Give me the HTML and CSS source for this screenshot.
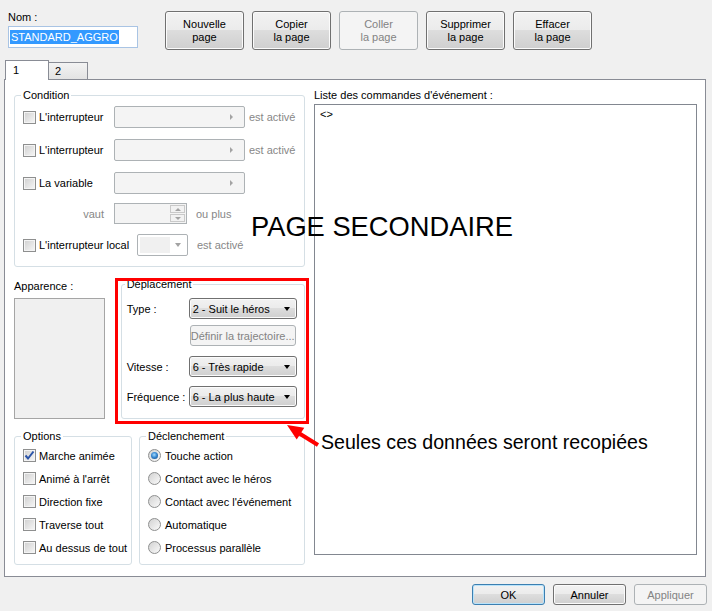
FILE: index.html
```html
<!DOCTYPE html>
<html>
<head>
<meta charset="utf-8">
<title>Page d'événement</title>
<link rel="stylesheet" href="styles.css">
</head>
<body>
<div class="fenetre">
	<div class="haut">
		<div class="nom">
			<label>Nom :</label>
			<div class="champ"><span class="selection">STANDARD_AGGRO</span></div>
		</div>
		<div class="boutons">
			<div class="bouton">Nouvelle<br>page</div>
			<div class="bouton">Copier<br>la page</div>
			<div class="bouton inactif">Coller<br>la page</div>
			<div class="bouton">Supprimer<br>la page</div>
			<div class="bouton">Effacer<br>la page</div>
		</div>
	</div>

	<div class="onglets">
		<div class="onglet actif">1</div>
		<div class="onglet">2</div>
	</div>

	<div class="panneau">
		<div class="gauche">
			<fieldset class="groupe condition">
				<legend>Condition</legend>
				<div class="ligne l1">
					<div class="coche-label"><span class="case"></span>L'interrupteur</div>
					<div class="selecteur"><span class="pointe"></span></div>
					<span class="gris suite">est activé</span>
				</div>
				<div class="ligne l2">
					<div class="coche-label"><span class="case"></span>L'interrupteur</div>
					<div class="selecteur"><span class="pointe"></span></div>
					<span class="gris suite">est activé</span>
				</div>
				<div class="ligne l2">
					<div class="coche-label"><span class="case"></span>La variable</div>
					<div class="selecteur"><span class="pointe"></span></div>
				</div>
				<div class="ligne l3 basse">
					<div class="vaut gris">vaut</div>
					<div class="spin">
						<div class="spin-btns">
							<span class="spin-b"><i class="haut-f"></i></span>
							<span class="spin-b"><i class="bas-f"></i></span>
						</div>
					</div>
					<span class="gris apres">ou plus</span>
				</div>
				<div class="ligne l4">
					<div class="coche-label large"><span class="case"></span>L'interrupteur local</div>
					<div class="deroul-gris"><span class="creux"></span><i class="bas-g"></i></div>
					<span class="gris apres">est activé</span>
				</div>
			</fieldset>

			<div class="milieu">
				<div class="apparence">
					<div class="etiquette">Apparence :</div>
					<div class="apercu"></div>
				</div>
				<fieldset class="groupe deplacement">
					<legend>Déplacement</legend>
					<div class="ligne-d">
						<span class="etiq">Type :</span>
						<div class="liste">2 - Suit le héros<span class="triangle"></span></div>
					</div>
					<div class="ligne-d d2">
						<span class="etiq"></span>
						<div class="definir">Définir la trajectoire...</div>
					</div>
					<div class="ligne-d d3">
						<span class="etiq">Vitesse :</span>
						<div class="liste">6 - Très rapide<span class="triangle"></span></div>
					</div>
					<div class="ligne-d d4">
						<span class="etiq">Fréquence :</span>
						<div class="liste">6 - La plus haute<span class="triangle"></span></div>
					</div>
				</fieldset>
			</div>

			<div class="bas">
				<fieldset class="groupe options">
					<legend>Options</legend>
					<div class="choix"><span class="case coche"><svg width="11" height="11" viewBox="0 0 11 11"><path d="M1.5 5.5 L4 8.5 L9.5 1.5" fill="none" stroke="#2b54a8" stroke-width="2"/></svg></span>Marche animée</div>
					<div class="choix"><span class="case"></span>Animé à l'arrêt</div>
					<div class="choix"><span class="case"></span>Direction fixe</div>
					<div class="choix"><span class="case"></span>Traverse tout</div>
					<div class="choix"><span class="case"></span>Au dessus de tout</div>
				</fieldset>
				<fieldset class="groupe declenchement">
					<legend>Déclenchement</legend>
					<div class="choix radio-l"><span class="rond pris"></span>Touche action</div>
					<div class="choix radio-l"><span class="rond"></span>Contact avec le héros</div>
					<div class="choix radio-l"><span class="rond"></span>Contact avec l'événement</div>
					<div class="choix radio-l"><span class="rond"></span>Automatique</div>
					<div class="choix radio-l"><span class="rond"></span>Processus parallèle</div>
				</fieldset>
			</div>
		</div>

		<div class="droite">
			<div class="etiquette-liste">Liste des commandes d'événement :</div>
			<div class="commandes">&lt;&gt;</div>
		</div>
	</div>

	<div class="pied">
		<div class="bouton-pied defaut">OK</div>
		<div class="bouton-pied">Annuler</div>
		<div class="bouton-pied inactif">Appliquer</div>
	</div>

	<!-- annotations posées par-dessus la capture -->
	<div class="titre-page">PAGE SECONDAIRE</div>
	<div class="cadre-rouge"></div>
	<svg class="fleche-rouge" width="45" height="34" viewBox="0 0 45 34">
		<line x1="17" y1="14" x2="38" y2="27" stroke="#ff0000" stroke-width="4"/>
		<polygon points="7,7 24.3,9.7 16.7,21.5" fill="#ff0000"/>
	</svg>
	<div class="note">Seules ces données seront recopiées</div>
</div>
</body>
</html>
```

FILE: styles.css
```css
* {box-sizing: border-box;}
body {margin: 0; background: #f0f0f0; font: 11px "Liberation Sans", Arial, sans-serif; color: #000;}
.fenetre {position: relative; width: 712px; height: 611px; overflow: hidden;}

/* haut : nom + boutons de page */
.haut {display: flex; height: 60px; padding: 10px 0 0 8px;}
.nom {width: 130px;}
.nom label {display: block; height: 14px; line-height: 14px;}
.champ {margin-top: 2px; height: 22px; border: 1px solid #a9c4e4; background: #fff; padding: 3px 1px 0 1px;}
.selection {display: inline-block; background: #3399ff; color: #fff; line-height: 14px; padding: 0 1px;}

.boutons {display: flex; gap: 8px; margin-left: 27px; padding-top: 1px;}
.bouton {
	width: 79px; height: 39px;
	border: 1px solid #707070; border-radius: 3px;
	background: linear-gradient(#f2f2f2 0%, #ebebeb 50%, #dddddd 50%, #cfcfcf 100%);
	box-shadow: inset 0 0 0 1px #fbfbfb;
	display: flex; align-items: center; justify-content: center;
	text-align: center; line-height: 13px;
}
.bouton.inactif {border-color: #adb2b5; background: #f4f4f4; box-shadow: none; color: #838383;}

/* onglets */
.onglets {display: flex; align-items: flex-end; height: 20px; margin-bottom: -1px; padding-left: 5px; position: relative; z-index: 1;}
.onglet {height: 17px; width: 40px; margin-left: -1px; margin-bottom: 1px; border: 1px solid #898c95; border-bottom: none; background: linear-gradient(#f3f3f3, #e3e3e3); padding: 2px 0 0 6px; line-height: 13px;}
.onglet.actif {height: 20px; width: 44px; margin: 0; background: #fff; padding: 3px 0 0 7px; position: relative; z-index: 2;}

/* panneau principal */
.panneau {margin-left: 4px; width: 702px; height: 498px; border: 1px solid #898c95; background: #fff; display: flex; gap: 9px; padding: 9px 0 0 9px;}
.gauche {width: 291px;}
.droite {width: 383px;}

fieldset.groupe {margin: 0; min-width: 0; border: 1px solid #d5dfe5; border-radius: 3px;}
fieldset.groupe legend {padding: 0 2px; margin-left: -2px; line-height: 13px;}

.gris {color: #878787;}

.case {
	display: inline-block; width: 13px; height: 13px; flex: none;
	border: 1px solid #8e8f8f;
	background: linear-gradient(135deg, #cfcfcf, #f7f7f7);
	box-shadow: inset 0 0 0 1px #f4f4f4;
	position: relative;
}
.case.coche svg {position: absolute; left: 0; top: 0;}
.rond {
	display: inline-block; width: 13px; height: 13px; flex: none;
	border: 1px solid #8e8f8f; border-radius: 50%;
	background: linear-gradient(135deg, #d2d2d2, #fafafa);
	position: relative;
}
.rond.pris::after {
	content: ""; position: absolute; left: 2px; top: 2px; width: 7px; height: 7px; border-radius: 50%;
	background: radial-gradient(circle at 45% 40%, #a6dcfd 0, #3a8ad3 45%, #0d3f78 100%);
}

/* Condition */
.condition {padding: 4px 0 10px 8px;}
.ligne {display: flex; align-items: center; height: 22px;}
.ligne.l2 {margin-top: 11px;}
.ligne.l1 {margin-top: 0;}
.ligne.l3 {margin-top: 9px; height: 21px;}
.ligne.l4 {margin-top: 10px;}
.coche-label {width: 91px; display: flex; align-items: center; gap: 3px; flex: none;}
.coche-label.large {width: 114px;}
.selecteur {width: 131px; height: 22px; border: 1px solid #adb2b5; border-radius: 2px; background: #f4f4f4; position: relative;}
.pointe {position: absolute; right: 11px; top: 7px; width: 0; height: 0; border-top: 3px solid transparent; border-bottom: 3px solid transparent; border-left: 3px solid #a3a3a3;}
.suite {margin-left: 4px;}
.apres {margin-left: 9px;}
.vaut {width: 91px; text-align: right; padding-right: 10px;}
.spin {width: 73px; height: 21px; border: 1px solid #adb2b5; background: #f4f4f4; position: relative;}
.spin-btns {position: absolute; right: 1px; top: 1px; width: 15px; height: 17px; display: flex; flex-direction: column; gap: 1px;}
.spin-b {flex: 1; border: 1px solid #c9c9c9; background: #f2f2f2; position: relative;}
.spin-b i {position: absolute; left: 4px; top: 2px; width: 0; height: 0; border-left: 3px solid transparent; border-right: 3px solid transparent;}
.haut-f {border-bottom: 3px solid #a3a3a3;}
.bas-f {border-top: 3px solid #a3a3a3;}
.deroul-gris {width: 51px; height: 22px; border: 1px solid #adb2b5; border-radius: 2px; background: #fff; position: relative;}
.creux {position: absolute; left: 2px; top: 2px; width: 30px; height: 16px; background: #f0f0f0;}
.bas-g {position: absolute; right: 6px; top: 8px; width: 0; height: 0; border-left: 3.5px solid transparent; border-right: 3.5px solid transparent; border-top: 4px solid #a3a3a3;}

/* Apparence + Déplacement */
.milieu {display: flex; gap: 16px; margin-top: 11px;}
.apparence {width: 91px;}
.etiquette {margin-top: 2px; line-height: 13px;}
.apercu {margin-top: 5px; height: 121px; border: 1px solid #a5a5a5; background: #f0f0f0;}
.deplacement {width: 185px; padding: 7px 0 8px 5px;}
.ligne-d {display: flex; align-items: center; height: 21px;}
.ligne-d.d2 {margin-top: 6px;}
.ligne-d.d3 {margin-top: 10px;}
.ligne-d.d4 {margin-top: 9px;}
.etiq {width: 62px; flex: none;}
.liste {
	width: 108px; height: 21px; position: relative;
	border: 1px solid #707070; border-radius: 3px;
	background: linear-gradient(#f2f2f2 0%, #ebebeb 50%, #dddddd 50%, #cfcfcf 100%);
	box-shadow: inset 0 0 0 1px #fbfbfb;
	display: flex; align-items: center; padding-left: 3px;
}
.triangle {position: absolute; right: 6px; top: 8px; width: 0; height: 0; border-left: 3.5px solid transparent; border-right: 3.5px solid transparent; border-top: 4px solid #000;}
.definir {width: 106px; height: 21px; margin-left: 1px; border: 1px solid #adb2b5; border-radius: 3px; background: #f4f4f4; color: #838383; display: flex; align-items: center; justify-content: center;}

/* Options + Déclenchement */
.bas {display: flex; gap: 7px; margin-top: 11px;}
.options {width: 118px; padding: 4px 0 8px 8px;}
.declenchement {width: 166px; padding: 4px 0 8px 8px;}
.choix {display: flex; align-items: center; gap: 3px; height: 17px; margin-top: 6px;}
.choix.radio-l {gap: 4px;}
legend + .choix {margin-top: 0;}

/* liste des commandes */
.etiquette-liste {line-height: 13px;}
.commandes {margin-top: 2px; height: 451px; border: 1px solid #828790; background: #fff; padding: 3px 5px; line-height: 13px;}

/* boutons du bas */
.pied {display: flex; justify-content: flex-end; gap: 8px; margin-top: 7px; padding-right: 5px;}
.bouton-pied {
	width: 73px; height: 21px;
	border: 1px solid #707070; border-radius: 3px;
	background: linear-gradient(#f2f2f2 0%, #ebebeb 50%, #dddddd 50%, #cfcfcf 100%);
	box-shadow: inset 0 0 0 1px #fbfbfb;
	display: flex; align-items: center; justify-content: center;
}
.bouton-pied.defaut {border-color: #3c7fb1; box-shadow: inset 0 0 0 1px #b9e3fa;}
.bouton-pied.inactif {border-color: #adb2b5; background: #f4f4f4; box-shadow: none; color: #838383;}

/* annotations */
.titre-page {position: absolute; left: 251px; top: 211px; font-size: 27.3px; line-height: 31px; white-space: nowrap;}
.cadre-rouge {position: absolute; left: 115px; top: 278px; width: 194px; height: 146px; border: 3px solid #ff0000;}
.fleche-rouge {position: absolute; left: 280px; top: 418px;}
.note {position: absolute; left: 321px; top: 431px; font-size: 19.6px; line-height: 23px; white-space: nowrap;}
```
